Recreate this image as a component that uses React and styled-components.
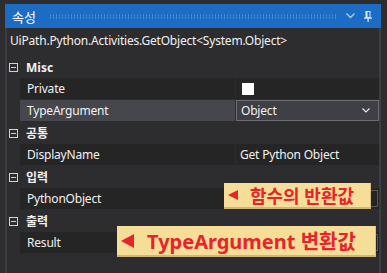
import styled, { createGlobalStyle } from "styled-components";

const Global = createGlobalStyle`
  html, body {
    margin: 0;
    padding: 0;
    background: #2d2d30;
  }
  body {
    font-family: "Noto Sans", "Noto Sans CJK KR", sans-serif;
    color: #f1f1f1;
  }
`;

// 전체 창
const Window = styled.div`
  position: relative;
  width: 387px;
  height: 273px;
  box-sizing: border-box;
  padding: 4px 6px 0 5px;
  background: #2d2d30;
  overflow: hidden;
`;

const TitleBar = styled.div`
  height: 24px;
  background: #1c6cc4;
  display: flex;
  align-items: center;
  padding: 0 9px 0 7px;
`;

const Title = styled.span`
  font-family: "Noto Sans CJK KR", sans-serif;
  font-size: 13px;
  color: #ffffff;
`;

// 제목줄의 점무늬
const Grip = styled.div`
  flex: 1;
  height: 5px;
  margin: 0 10px 0 13px;
  background-image: radial-gradient(circle, #5f9bd8 0.7px, transparent 0.9px);
  background-size: 3px 2.5px;
`;

const TitleIcon = styled.svg`
  display: block;
  margin-left: ${(props) => props.gap || 0}px;
`;

const Body = styled.div`
  height: 245px;
  border-left: 2px solid #3c3c40;
  border-right: 2px solid #3e3e42;
`;

const ClassName = styled.div`
  height: 28px;
  line-height: 26px;
  padding-left: 3px;
  font-size: 12px;
  letter-spacing: -0.2px;
  color: #f1f1f1;
  white-space: nowrap;
`;

const Category = styled.div`
  height: 22px;
  display: flex;
  align-items: center;
  padding-left: 2px;
`;

const Toggle = styled.span`
  width: 7px;
  height: 7px;
  border: 1px solid #d0d0d0;
  position: relative;
  &::after {
    content: "";
    position: absolute;
    left: 1px;
    right: 1px;
    top: 3px;
    height: 1px;
    background: #d0d0d0;
  }
`;

const CategoryName = styled.span`
  margin-left: 8px;
  font-family: "Noto Sans", "Noto Sans CJK KR", sans-serif;
  font-weight: bold;
  font-size: 12px;
  color: #f1f1f1;
`;

const Row = styled.div`
  height: 21px;
  margin-left: 13px;
  margin-bottom: 1px;
  display: grid;
  grid-template-columns: 215px 1fr;
  background: #252526;
`;

const Name = styled.div`
  display: flex;
  align-items: center;
  padding-left: 7px;
  font-size: 12px;
  letter-spacing: -0.2px;
  color: #f1f1f1;
  background: ${(props) => (props.selected ? "#45474d" : "transparent")};
`;

const Value = styled.div`
  display: flex;
  align-items: center;
  border-left: 1px solid #2d2d30;
  padding-left: 4px;
  font-size: 12px;
  letter-spacing: -0.2px;
  color: #f1f1f1;
  position: relative;
`;

const Check = styled.span`
  width: 12px;
  height: 12px;
  margin-left: 2px;
  background: #ffffff;
`;

const Select = styled.div`
  position: absolute;
  inset: 0 0 0 0;
  border: 1px solid #6b6b70;
  background: #3f3f46;
  display: flex;
  align-items: center;
  justify-content: space-between;
  padding: 0 8px 0 4px;
  font-size: 12px;
`;

const Input = styled.div`
  position: absolute;
  top: 2px;
  bottom: 2px;
  left: 2px;
  right: 1px;
  border: 1px solid #55555a;
  display: flex;
  justify-content: flex-end;
  align-items: flex-end;
  padding: 0 6px 2px 0;
  font-size: 10px;
  color: #cfcfcf;
`;

// 노란 말풍선
const Callout = styled.div`
  position: absolute;
  left: ${(props) => props.x}px;
  top: ${(props) => props.y}px;
  width: ${(props) => props.w}px;
  height: ${(props) => props.h}px;
  box-sizing: border-box;
  background: #f6de98;
  border-bottom: 2px solid #cdb678;
  border-right: 1px solid #d8c183;
  display: flex;
  align-items: center;
  padding-left: 4px;
  color: #e8232a;
  font-family: "Noto Sans", "Noto Sans CJK KR", sans-serif;
  font-weight: bold;
  font-size: ${(props) => props.size}px;
  white-space: nowrap;
`;

const Arrow = styled.span`
  width: 0;
  height: 0;
  border-top: ${(props) => props.s * 0.55}px solid transparent;
  border-bottom: ${(props) => props.s * 0.55}px solid transparent;
  border-right: ${(props) => props.s}px solid #e8232a;
  margin-right: ${(props) => props.gap}px;
`;

const Chevron = () => (
  <svg width="8" height="5" viewBox="0 0 8 5">
    <polyline points="0.5,0.5 4,4 7.5,0.5" fill="none" stroke="#e8e8e8" strokeWidth="1.2" />
  </svg>
);

export default function App() {
  return (
    <>
      <Global />
      <Window>
        <TitleBar>
          <Title>속성</Title>
          <Grip />
          <TitleIcon width="9" height="6" viewBox="0 0 9 6">
            <polyline points="0.5,0.5 4.5,4.5 8.5,0.5" fill="none" stroke="#a9cdf2" strokeWidth="1.4" />
          </TitleIcon>
          <TitleIcon gap={9} width="8" height="11" viewBox="0 0 8 11">
            <rect x="2" y="0.5" width="4" height="6" fill="none" stroke="#dbe9f8" strokeWidth="1" />
            <rect x="2" y="0" width="1.5" height="7" fill="#dbe9f8" />
            <rect x="0" y="6.5" width="8" height="1.2" fill="#dbe9f8" />
            <rect x="3.5" y="7" width="1.2" height="4" fill="#dbe9f8" />
          </TitleIcon>
        </TitleBar>
        <Body>
          <ClassName>UiPath.Python.Activities.GetObject&lt;System.Object&gt;</ClassName>

          <Category>
            <Toggle />
            <CategoryName>Misc</CategoryName>
          </Category>
          <Row>
            <Name>Private</Name>
            <Value>
              <Check />
            </Value>
          </Row>
          <Row>
            <Name selected>TypeArgument</Name>
            <Value>
              <Select>
                <span>Object</span>
                <Chevron />
              </Select>
            </Value>
          </Row>

          <Category>
            <Toggle />
            <CategoryName>공통</CategoryName>
          </Category>
          <Row>
            <Name>DisplayName</Name>
            <Value>Get Python Object</Value>
          </Row>

          <Category>
            <Toggle />
            <CategoryName>입력</CategoryName>
          </Category>
          <Row>
            <Name>PythonObject</Name>
            <Value>
              <Input>...</Input>
            </Value>
          </Row>

          <Category>
            <Toggle />
            <CategoryName>출력</CategoryName>
          </Category>
          <Row>
            <Name>Result</Name>
            <Value>
              <Input>...</Input>
            </Value>
          </Row>
        </Body>

        <Callout x={224} y={183} w={147} h={26} size={18}>
          <Arrow s={10} gap={12} />
          함수의 반환값
        </Callout>
        <Callout x={117} y={226} w={259} h={31} size={20}>
          <Arrow s={13} gap={13} />
          TypeArgument 변환값
        </Callout>
      </Window>
    </>
  );
}
